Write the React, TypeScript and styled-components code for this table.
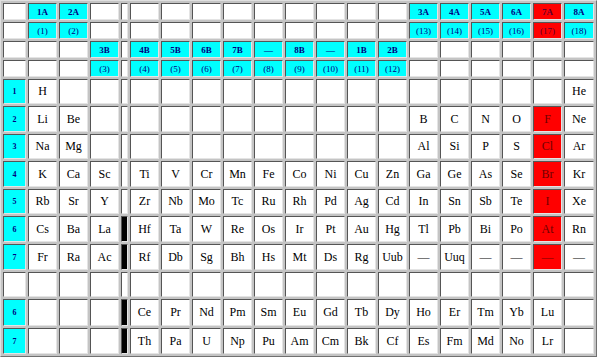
import styled, { createGlobalStyle } from 'styled-components'

type Tone = 'white' | 'cyan' | 'red' | 'black'
type Kind = 'group' | 'num' | 'period' | 'el'

interface Cell {
  text?: string
  tone: Tone
  kind: Kind
}

const GlobalStyle = createGlobalStyle`
  body {
    margin: 0;
    background: #fff;
    font-family: "Liberation Serif", "Times New Roman", serif;
  }
`

const Table = styled.div`
  display: inline-grid;
  grid-template-columns: 23px repeat(3, 29px) 7px repeat(14, 29px) 30px;
  grid-template-rows: repeat(4, 17px) 25px 26px 25px 26px 25px 26px 26px 25px 27px 26px;
  gap: 2px;
  padding: 2px;
  background: #c4c4c4;
  border: 1px solid;
  border-color: #e0e0e0 #707070 #707070 #e0e0e0;
`

const toneBg: Record<Tone, string> = {
  white: '#ffffff',
  cyan: '#00ffff',
  red: '#ff0000',
  black: '#000000',
}

const Td = styled.div<{ $tone: Tone; $kind: Kind }>`
  box-sizing: border-box;
  display: flex;
  align-items: center;
  justify-content: center;
  border: 1px solid;
  border-color: #555 #e4e4e4 #e4e4e4 #555;
  background: ${(p) => toneBg[p.$tone]};
  white-space: nowrap;
  overflow: hidden;
  color: ${(p) =>
    p.$kind === 'el' ? (p.$tone === 'red' ? '#700000' : '#000') : p.$tone === 'red' ? '#600030' : '#000080'};
  font-size: ${(p) => (p.$kind === 'el' ? '12px' : p.$kind === 'period' ? '8px' : '9px')};
  font-weight: ${(p) => (p.$kind === 'el' || p.$kind === 'num' ? 400 : 700)};
`

const blank = (): Cell => ({ tone: 'white', kind: 'el' })

// main holds the 18 group columns; a narrow separator sits after group 3
function assemble(first: Cell, main: Cell[], sep: Tone): Cell[] {
  return [first, ...main.slice(0, 3), { tone: sep, kind: 'el' }, ...main.slice(3)]
}

function headerRow(labels: Record<number, string>, kind: Kind): Cell[] {
  const main: Cell[] = []
  for (let g = 1; g <= 18; g++) {
    const text = labels[g]
    main.push(text === undefined ? blank() : { text, kind, tone: g === 17 ? 'red' : 'cyan' })
  }
  return assemble(blank(), main, 'white')
}

function elementRow(period: string, symbols: string, sep: Tone, redCol: boolean): Cell[] {
  const syms = symbols.split(' ').map((s) => (s === '.' ? '' : s))
  const main: Cell[] = syms.map((s, i) => ({
    text: s,
    kind: 'el',
    tone: redCol && i === 16 ? 'red' : 'white',
  }))
  const first: Cell = period ? { text: period, tone: 'cyan', kind: 'period' } : blank()
  return assemble(first, main, sep)
}

const rows: Cell[][] = [
  headerRow({ 1: '1A', 2: '2A', 13: '3A', 14: '4A', 15: '5A', 16: '6A', 17: '7A', 18: '8A' }, 'group'),
  headerRow({ 1: '(1)', 2: '(2)', 13: '(13)', 14: '(14)', 15: '(15)', 16: '(16)', 17: '(17)', 18: '(18)' }, 'num'),
  headerRow(
    { 3: '3B', 4: '4B', 5: '5B', 6: '6B', 7: '7B', 8: '—', 9: '8B', 10: '—', 11: '1B', 12: '2B' },
    'group',
  ),
  headerRow(
    { 3: '(3)', 4: '(4)', 5: '(5)', 6: '(6)', 7: '(7)', 8: '(8)', 9: '(9)', 10: '(10)', 11: '(11)', 12: '(12)' },
    'num',
  ),
  elementRow('1', 'H . . . . . . . . . . . . . . . . He', 'white', false),
  elementRow('2', 'Li Be . . . . . . . . . . B C N O F Ne', 'white', true),
  elementRow('3', 'Na Mg . . . . . . . . . . Al Si P S Cl Ar', 'white', true),
  elementRow('4', 'K Ca Sc Ti V Cr Mn Fe Co Ni Cu Zn Ga Ge As Se Br Kr', 'white', true),
  elementRow('5', 'Rb Sr Y Zr Nb Mo Tc Ru Rh Pd Ag Cd In Sn Sb Te I Xe', 'white', true),
  elementRow('6', 'Cs Ba La Hf Ta W Re Os Ir Pt Au Hg Tl Pb Bi Po At Rn', 'black', true),
  elementRow('7', 'Fr Ra Ac Rf Db Sg Bh Hs Mt Ds Rg Uub — Uuq — — — —', 'black', true),
  elementRow('', '. . . . . . . . . . . . . . . . . .', 'white', false),
  elementRow('6', '. . . Ce Pr Nd Pm Sm Eu Gd Tb Dy Ho Er Tm Yb Lu .', 'black', false),
  elementRow('7', '. . . Th Pa U Np Pu Am Cm Bk Cf Es Fm Md No Lr .', 'black', false),
]

export default function App() {
  return (
    <>
      <GlobalStyle />
      <Table>
        {rows.map((row, r) =>
          row.map((cell, c) => (
            <Td key={`${r}-${c}`} $tone={cell.tone} $kind={cell.kind}>
              {cell.text}
            </Td>
          )),
        )}
      </Table>
    </>
  )
}
